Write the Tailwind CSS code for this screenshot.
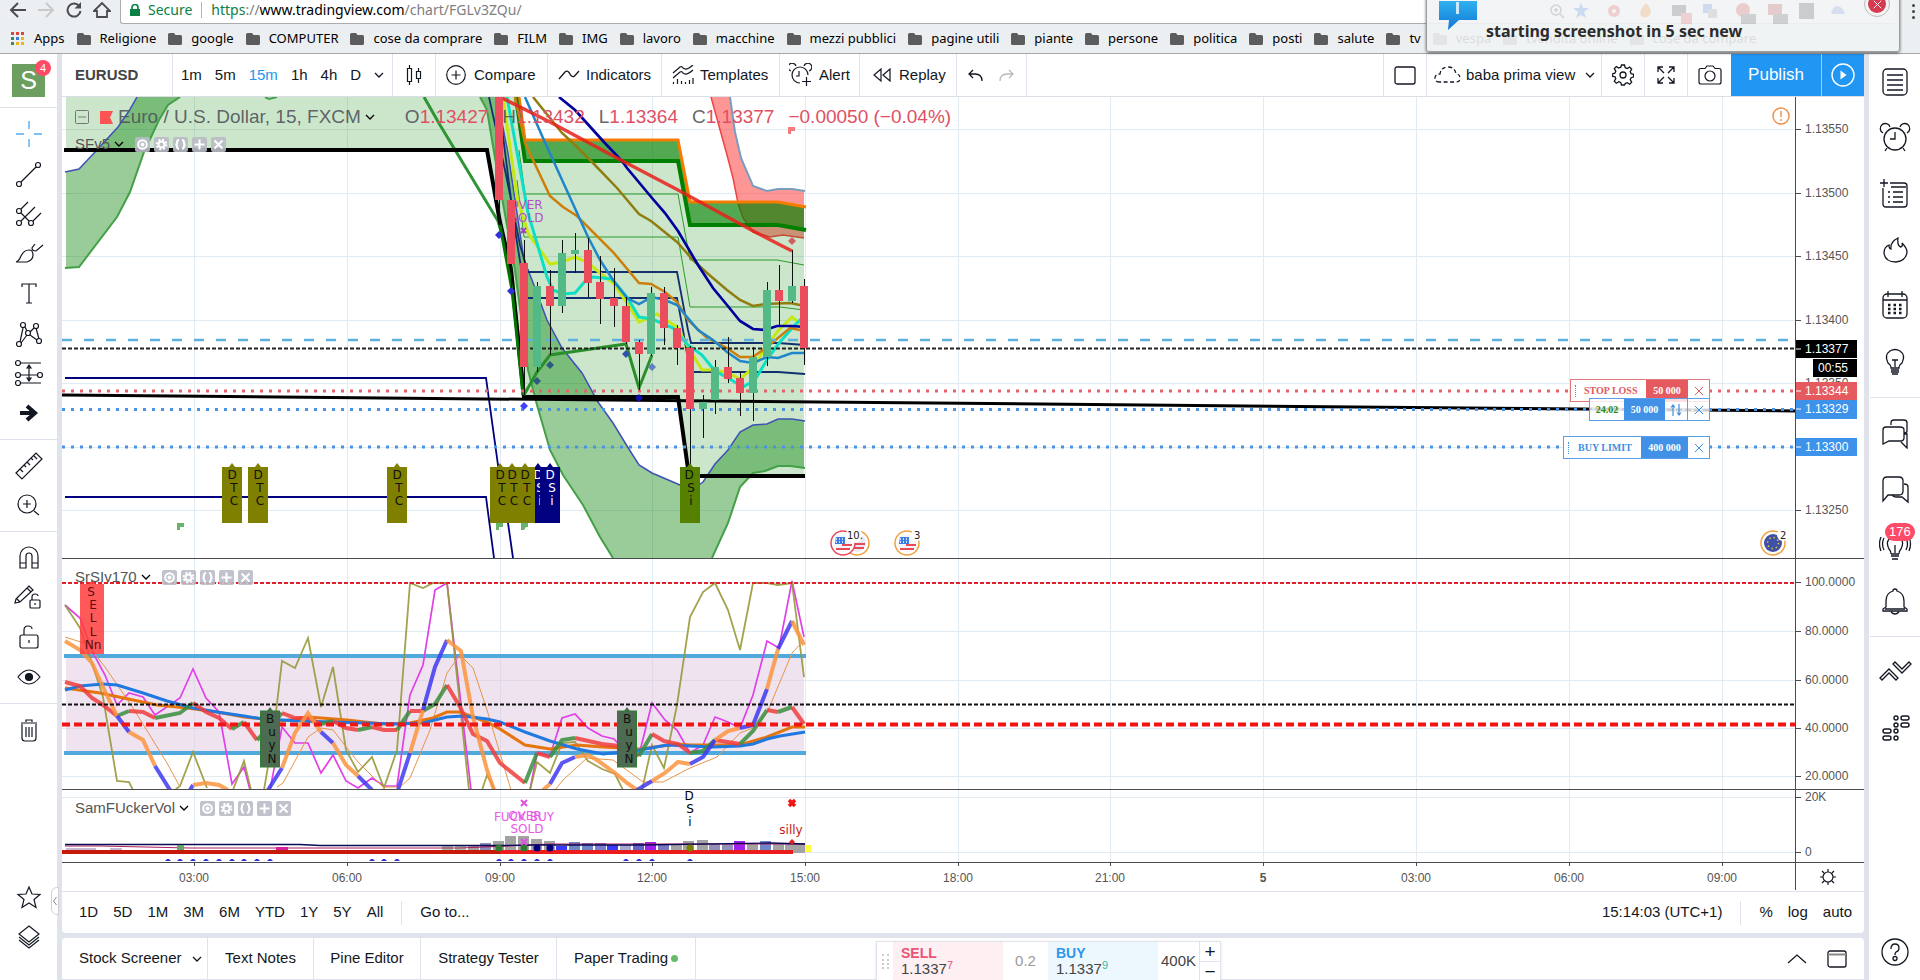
<!DOCTYPE html>
<html lang="en">
<head>
  <meta charset="UTF-8">
  <meta name="viewport" content="width=device-width, initial-scale=1.0">
  <title>EURUSD 1.13377 – TradingView</title>
  <script src="https://cdn.jsdelivr.net/npm/@tailwindcss/browser@4"></script>
</head>
<body class="h-screen flex flex-col overflow-hidden bg-[#e0e3eb] text-[#131722] font-['Liberation_Sans',Arial,sans-serif] text-[15px]">

  <!-- icon library -->
  <svg class="hidden" fill="none">
    <symbol id="i-folder" viewBox="0 0 14 12"><path d="M0 1.5Q0 0 1.5 0H6l1.5 2h5Q14 2 14 3.5v7q0 1.500-1.500 1.500h-11Q0 12 0 10.500z" fill="#5a5c5e"/></symbol>
    <symbol id="i-chev" viewBox="0 0 10 6"><path d="M1 1l4 4 4-4" fill="none" stroke="currentColor" stroke-width="1.300"/></symbol>
    <symbol id="i-x" viewBox="0 0 12 12"><path d="M1 1l10 10M11 1L1 11" fill="none" stroke="currentColor" stroke-width="1.200"/></symbol>
  </svg>

  <!-- browser chrome -->
  <header class="relative shrink-0 h-[54px] border-b border-[#a4a6a8] bg-[#eceff1] font-['Noto_Sans','Open_Sans',sans-serif] text-black">
    <div class="flex h-6">
      <div class="flex w-[120px] shrink-0 items-start justify-around pt-[2px] pl-1 pr-1 text-[#4a4c4f]">
        <button aria-label="Back"><svg width="18" height="16" fill="none" stroke="currentColor" stroke-width="2"><path d="M17 8H2M9 1L2 8l7 7"/></svg></button>
        <button aria-label="Forward" class="text-[#c8cacc]"><svg width="18" height="16" fill="none" stroke="currentColor" stroke-width="2"><path d="M1 8h15M9 1l7 7-7 7"/></svg></button>
        <button aria-label="Reload"><svg width="18" height="16" fill="none" stroke="currentColor" stroke-width="2"><path d="M14.500 4.500A6.500 6.500 0 1 0 15.500 9"/><path d="M16 0v6.500H9.500z" fill="currentColor" stroke="none"/></svg></button>
        <button aria-label="Home"><svg width="18" height="16" fill="none" stroke="currentColor" stroke-width="1.800"><path d="M1 9l8-8 8 8h-3v6H4V9z"/></svg></button>
      </div>
      <div class="flex h-6 flex-1 items-start rounded-bl-[3px] border-b border-l border-[#a9abad] bg-white pl-[9px] text-[14px] leading-5">
        <svg class="mt-1" width="10" height="12"><path d="M0 5h10v7H0z" fill="#0b8043"/><path d="M2 5V3.500a3 3 0 0 1 6 0V5" fill="none" stroke="#0b8043" stroke-width="1.700"/></svg>
        <span class="ml-2 text-[#0b8043]">Secure</span>
        <span class="mx-[9px] mt-[2px] h-4 w-px bg-[#b5b5b5]"></span>
        <div role="textbox" aria-label="Address" class="whitespace-nowrap text-[#808080]"><span class="text-[#0b8043]">https</span>://<span class="text-black">www.tradingview.com</span>/chart/FGLv3ZQu/</div>
      </div>
      <button aria-label="Menu" class="flex w-[25px] shrink-0 flex-col items-center gap-[3px] pt-1 pl-3">
        <span class="h-[3px] w-[3px] rounded-full bg-[#444]"></span><span class="h-[3px] w-[3px] rounded-full bg-[#444]"></span><span class="h-[3px] w-[3px] rounded-full bg-[#444]"></span>
      </button>
    </div>
    <nav id="bookmarks" class="flex h-[29px] items-center gap-3 pl-[11px] text-[13px] whitespace-nowrap">
      <a href="#" class="flex items-center gap-[9px]">
        <svg width="14" height="14"><g fill="#d8473a"><path d="M0 0h3v3H0zM5 0h3v3H5zM10 0h3v3h-3z"/></g><g fill="#3c8a4e"><path d="M0 5h3v3H0zM0 10h3v3H0z"/></g><path d="M5 5h3v3H5z" fill="#3b78d8"/><path d="M10 5h3v3h-3zM5 10h3v3H5zM10 10h3v3h-3z" fill="#eeb21f"/></svg>Apps</a>
    </nav>

    <!-- desktop notification -->
    <div class="absolute top-[-4px] right-5 h-14 w-[474px] rounded-[3px] border border-[#9b9d9f] bg-[#f1f3f4]/90 shadow-[0_1px_3px_rgba(0,0,0,0.6)]">
      <svg class="absolute top-1 left-3" width="38" height="30"><defs><linearGradient id="bub" x1="0" x2="0" y1="0" y2="1"><stop offset="0" stop-color="#2fb2ee"/><stop offset="1" stop-color="#1176d8"/></linearGradient></defs><path d="M0 0h38v19H20L9 29l1-10H0z" fill="url(#bub)"/><path d="M17 1h3v12h-3z" fill="#cdeafc"/></svg>
      <svg class="absolute top-1 left-[120px] opacity-20" width="320" height="26">
        <g fill="none" stroke="#555" stroke-width="1.500"><circle cx="9" cy="9" r="5"/><path d="M13 13l4 4M7 9h4M9 7v4"/></g>
        <path d="M34 2l2 5h6l-5 4 2 6-5-3-5 3 2-6-5-4h6z" fill="#3b78e7"/>
        <circle cx="67" cy="10" r="6" fill="#e04040"/><circle cx="67" cy="10" r="2" fill="#fff"/>
        <path d="M99 2q7 7 4 12-4 4-9 1-3-5 5-13z" fill="#f08020"/>
        <path d="M125 4h14v11h-14z" fill="#333"/><path d="M134 12h11v11h-11z" fill="#e05050"/>
        <path d="M156 3h9v9h-9z" fill="#3b78e7"/><path d="M161 8h9v9h-9z" fill="#889"/>
        <circle cx="196" cy="9" r="7" fill="#d03030"/><path d="M194 13h15v10h-15z" fill="#444"/>
        <path d="M221 3h14v11h-14z" fill="#b03030"/><path d="M226 13h15v10h-15z" fill="#444"/>
        <path d="M252 2h15v16h-15z" fill="#333"/><path d="M284 13q2-9 7-8t7 8z" fill="#6d8de0"/>
      </svg>
      <span class="absolute top-[22px] left-[59px] text-[16px] font-bold leading-6 text-[#2c2c2c] whitespace-nowrap">starting screenshot in 5 sec new</span>
      <button aria-label="Close" class="absolute top-[-6px] right-[9px] grid h-[26px] w-[26px] place-items-center rounded-full border border-[#bbb] bg-[#f4f4f4]">
        <span class="grid h-[18px] w-[18px] place-items-center rounded-full bg-[#d43b50] text-white"><svg width="9" height="9"><use href="#i-x"/></svg></span>
      </button>
    </div>
  </header>

  <div class="flex min-h-0 flex-1 gap-[5px]">
    <!-- drawing tools -->
    <aside class="relative flex w-[57px] shrink-0 flex-col bg-white">
      <div class="relative h-[54px] border-b border-[#dfe1e8] pt-[10px] pl-3">
        <div class="grid h-[33px] w-[33px] place-items-center bg-[#6c9e5f] text-[25px] leading-none text-white">S</div>
        <span class="absolute top-[6px] left-[35px] grid h-4 w-4 place-items-center rounded-full bg-[#ff4a68] text-[11px] text-white">4</span>
      </div>
      <div id="tools" class="flex flex-1 flex-col"></div>
      <button aria-label="Hide toolbar" class="absolute top-[833px] left-[51px] z-10 grid h-7 w-2 place-items-center rounded-l-md border border-[#cfd1da] bg-white text-[#888]"><svg width="4" height="8" fill="none" stroke="currentColor"><path d="M3.500 0L.5 4l3 4"/></svg></button>
    </aside>

    <main class="flex min-w-0 flex-1 flex-col">
      <!-- top toolbar -->
      <div class="flex h-[43px] shrink-0 border-b border-[#dcdee6] bg-white whitespace-nowrap">
        <button class="w-[111px] border-r border-[#e0e3eb] pl-[13px] text-left font-bold text-[#444]">EURUSD</button>
        <div class="flex w-[220px] items-center gap-[13px] border-r border-[#e0e3eb] pl-2">
          <button>1m</button><button>5m</button><button class="text-[#2196f3]">15m</button><button>1h</button><button>4h</button><button>D</button>
          <button aria-label="More intervals"><svg width="10" height="6"><use href="#i-chev"/></svg></button>
        </div>
        <button aria-label="Bar style" class="grid w-[43px] place-items-center border-r border-[#e0e3eb]"><svg width="16" height="24" fill="none" stroke="currentColor" stroke-width="1.200"><path d="M1.500 5.500h4v13h-4zM3.500 2v3M3.500 19v3M10.500 8.500h4v7h-4zM12.500 5v3M12.500 16v4"/></svg></button>
        <button class="flex w-28 items-center gap-2 border-r border-[#e0e3eb] pl-[10px]"><svg width="20" height="20" fill="none" stroke="currentColor" stroke-width="1.200"><circle cx="10" cy="10" r="9.300"/><path d="M5.500 10h9M10 5.500v9"/></svg>Compare</button>
        <button class="flex w-[114px] items-center gap-[6px] border-r border-[#e0e3eb] pl-[10px]"><svg width="22" height="12" fill="none" stroke="currentColor" stroke-width="1.300"><path d="M1 10l6-7q2-2 4 .5l2 3q2 2 3.500.5L21 2"/></svg>Indicators</button>
        <button class="flex w-[118px] items-center gap-[6px] border-r border-[#e0e3eb] pl-[10px]"><svg width="22" height="20" fill="none" stroke="currentColor" stroke-width="1.200"><path d="M1 8l7-6q2-1 3 1l2 1q2 1 8-4M1 13l7-6q2-1 3 1l2 1q2 1 8-4M1.500 17v2M5.500 14v5M9.500 16v3M13.500 17v2M17.500 15v4M21 13v6"/></svg>Templates</button>
        <button class="flex w-20 items-center gap-[7px] border-r border-[#e0e3eb] pl-[9px]"><svg width="23" height="24" fill="none" stroke="currentColor" stroke-width="1.200"><path d="M11 20a8 8 0 1 1 8-8M10 8v5H7M2 8a4 4 0 1 1 5-5M20 8a4 4 0 1 0-5-5M17.500 14v9M13 18.500h9"/></svg>Alert</button>
        <button class="flex w-[97px] items-center gap-2 border-r border-[#e0e3eb] pl-[13px]"><svg width="18" height="14" fill="none" stroke="currentColor" stroke-width="1.200"><path d="M8 1v12L1 7zM17 1v12l-7-6z"/></svg>Replay</button>
        <div class="flex w-[70px] items-center gap-4 border-r border-[#e0e3eb] pl-[11px]">
          <button aria-label="Undo"><svg width="15" height="13" fill="none" stroke="currentColor" stroke-width="1.300"><path d="M5 1L1 5l4 4M1 5h6q7 0 7 7"/></svg></button>
          <button aria-label="Redo" class="text-[#bbb]"><svg width="15" height="13" fill="none" stroke="currentColor" stroke-width="1.300"><path d="M10 1l4 4-4 4M14 5H8q-7 0-7 7"/></svg></button>
        </div>
        <div class="flex-1 border-r border-[#e0e3eb]"></div>
        <button aria-label="Layout" class="grid w-[43px] place-items-center border-r border-[#e0e3eb]"><svg width="22" height="19" fill="none" stroke="currentColor" stroke-width="1.300"><rect x="1" y="1" width="20" height="17" rx="2"/></svg></button>
        <button class="flex w-[175px] items-center border-r border-[#e0e3eb] pl-[7px]"><svg width="27" height="18" fill="none" stroke="currentColor" stroke-width="1.300" stroke-dasharray="4 2.500"><path d="M6 16q-5 0-5-4t5-4q1-7 8-7t8 7q4 0 4 4t-4 4z"/></svg><span class="ml-[5px]">baba prima view</span><svg class="mr-[6px] ml-auto" width="10" height="6"><use href="#i-chev"/></svg></button>
        <button aria-label="Settings" class="grid w-[43px] place-items-center border-r border-[#e0e3eb]"><svg width="22" height="22" fill="none" stroke="currentColor" stroke-width="1.300"><path d="M9.500 1h3l.7 2.700 2 .9 2.500-1.500 2 2-1.500 2.500.9 2 2.400.6v2.800l-2.400.7-.9 2 1.500 2.500-2 2-2.500-1.500-2 .9L12.500 21h-3l-.7-2.400-2-.9-2.500 1.500-2-2 1.500-2.500-.9-2L.7 12.500V9.700l2.200-.6.9-2L2.300 4.600l2-2 2.500 1.500 2-.9z"/><circle cx="11" cy="11" r="3"/></svg></button>
        <button aria-label="Fullscreen" class="grid w-[43px] place-items-center border-r border-[#e0e3eb]"><svg width="18" height="18" fill="none" stroke="currentColor" stroke-width="1.300"><path d="M1 6V1h5M1 1l6 6M12 1h5v5M17 1l-6 6M1 12v5h5M1 17l6-6M17 12v5h-5M17 17l-6-6"/></svg></button>
        <button aria-label="Screenshot" class="grid w-[43px] place-items-center"><svg width="24" height="20" fill="none" stroke="currentColor" stroke-width="1.200"><path d="M3 3.500h4L9 1h6l2 2.500h4q2 0 2 2V17q0 2-2 2H3q-2 0-2-2V5.500q0-2 2-2z"/><circle cx="12" cy="11" r="5"/></svg></button>
        <button class="w-[91px] border-r border-[#9fd0fa] bg-[#2196f3] text-[17px] text-white">Publish</button>
        <button aria-label="Start streaming" class="grid w-[42px] place-items-center bg-[#2196f3]"><svg width="24" height="24"><circle cx="12" cy="12" r="11" fill="none" stroke="#fff" stroke-width="1.400"/><path d="M9.500 7.500v9l6-4.500z" fill="#fff"/></svg></button>
      </div>

      <!-- chart -->
      <section class="relative min-h-0 flex-1 overflow-hidden bg-white">
        <svg id="chart" class="absolute inset-0 h-full w-full" viewBox="62 97 1802 793" preserveAspectRatio="xMinYMin meet" fill="none" font-family="'Liberation Sans',Arial,sans-serif" font-size="12">
          <defs>
            <clipPath id="p1"><path d="M62 97h1733v461H62z"/></clipPath>
            <clipPath id="p2"><path d="M62 559h1733v230H62z"/></clipPath>
            <clipPath id="p3"><path d="M62 790h1733v72H62z"/></clipPath>
          </defs>
          <g id="grid" stroke="#e1ebf1"></g>

          <!-- price pane -->
          <g clip-path="url(#p1)">
            <path d="M711 97L727 155 733 178 738 203 743 218 753 232 770 237 783 235 804 238V191L792 189H778L767 191 753 186 741 158 735 132 730 97z" fill="#ff4040" fill-opacity=".55"/>
            <path d="M711 97L727 155 733 178 738 203 743 218 753 232 770 237 783 235 804 238" stroke="#ef4444" stroke-width="1.500"/>
            <path d="M730 97L735 132 741 158 753 186 767 191 778 189H792L805 191" stroke="#7a9cbd" stroke-width="2"/>
            <path d="M66 97H519L525 140H678L690 202H778L804 207V477H700L689 476 678 397H524L511 270 500 222 487 150H66z" fill="#008000" fill-opacity=".2"/>
            <path d="M519 97L525 140H678L690 202H778L804 207V230L778 225H690L678 161H525L516 97z" fill="#008000" fill-opacity=".6"/>
            <path d="M66 172L79 169 96 151 118 127 129 111 137 97H180L168 105 159 120 144 152 130 192 117 217 79 267 66 268z" fill="#008000" fill-opacity=".4"/>
            <path d="M497 97L508 153 524 260 532 280 547 320 562 348 582 373 598 402 613 423 627 446 639 465 652 473 680 485 691 490 703 482 715 464 728 450 740 432 753 425 767 424 778 419 792 419 804 421V468L790 466H778L765 471 753 473 740 487 728 523 712 558H613L600 537 583 505 563 475 550 450 537 405 528 370 515 270 497 170 487 110 480 97z" fill="#008000" fill-opacity=".4"/>
            <g stroke="#3f51b5" stroke-width="1.500">
              <path d="M65 172L79 169 96 151 118 127 129 111 137 97"/>
              <path d="M497 97L508 153 524 260 532 280 547 320 562 348 582 373 598 402 613 423 627 446 639 465 652 473 680 485 691 490 703 482 715 464 728 450 740 432 753 425 767 424 778 419H792L805 421"/>
            </g>
            <g stroke="#43a047" stroke-width="2">
              <path d="M65 268L79 267 117 217 130 192 144 152 159 120 168 105 180 97M265 97l4 2 8-2"/>
              <path d="M480 97L487 110 497 170 515 270 528 370 537 405 550 450 563 475 583 505 600 537 613 558M712 558L728 523 740 487 753 473 765 471 778 466H790L805 468"/>
            </g>
            <g stroke="#2b9a2b">
              <path d="M519 150L525 194H678L690 260H777L804 265M517 180L524 237H678L690 307H780L804 310"/>
            </g>
            <path d="M411 97L440 135 498 221" stroke="none"/>
            <path d="M424 97L440 125 498 221 511 265 524 395" stroke="#2f9433" stroke-width="3"/>
            <g stroke="#000080" stroke-width="1.800">
              <path d="M65 378H486L498 465 508 523 513 558M65 497H486L494 558"/>
              <path d="M489 97L505 170 520 245 528 272H677L688 330 691 343H778L805 345M498 97L515 230 526 298H677L683 330 690 372H778L805 374" stroke="#12306e"/>
            </g>
            <path d="M64 150H487L500 222 511 270 524 397H678L689 476H805" stroke="#000" stroke-width="4"/>
            <path d="M500 225L512 290 523 395" stroke="#007500" stroke-width="3"/>
            <path d="M519 97L525 140H678L690 202H778L806 207" stroke="#f57c00" stroke-width="3"/>
            <path d="M516 97L525 161H678L690 225H778L806 230" stroke="#008000" stroke-width="4"/>
            <path d="M503 97L517 197 528 233 550 264 562 262 575 257 587 262 600 273 613 283 627 303 639 322 657 314 677 327 688 347 702 370H715L728 373 740 379 753 368 765 348 777 332 792 317 805 328" stroke="#c6e80e" stroke-width="3"/>
            <path d="M507 97L528 213 547 277 553 290 563 294 575 293 587 279 593 277 612 279 627 297 639 317 652 319 673 328 688 345 702 355 715 371 728 378 743 387 755 380 768 358 780 342 793 327 805 315" stroke="#0be0c4" stroke-width="3"/>
            <path d="M515 97L525 143 550 196 563 207 577 216 613 252 639 283 651 284 665 292 677 302 688 320 707 338 727 348 740 357H753L767 347 790 328 805 331" stroke="#cc7f0b" stroke-width="2.500"/>
            <path d="M533 97L562 133 575 145 592 162 617 188 639 214 651 221 677 242 693 260 707 273 727 290 740 300 753 306 765 304 790 303 805 306" stroke="#8f7d10" stroke-width="2.500"/>
            <path d="M525 97L543 138 568 193 588 237 600 260 613 280 627 298 639 304 652 297 665 300 677 305 698 330 713 340 727 352 740 361 753 363 767 357 778 358 792 353H805" stroke="#1f86c9" stroke-width="2.500"/>
            <path d="M559 97L575 110 603 141 622 161 627 168 652 198 665 213 678 231 698 265 713 288 727 305 740 321 753 329 765 330 777 326H792L805 327" stroke="#00009c" stroke-width="2.700"/>
            <path d="M500 97L550 122 617 158 678 190 755 232 792 251" stroke="#e8201a" stroke-opacity=".85" stroke-width="3.500"/>
            <path d="M524 395L537 372 550 355 626 344 639 388 652 355" stroke="#2a8e2a" stroke-width="3"/>
            <path d="M62 340H1795" stroke="#5fb0da" stroke-width="2.500" stroke-dasharray="10 12"/>
            <path d="M62 348.500H1795" stroke="#222" stroke-width="2" stroke-dasharray="4 2"/>
            <path d="M62 391H1795" stroke="#e4626c" stroke-width="3" stroke-dasharray="3 6"/>
            <path d="M62 395L1795 411" stroke="#000" stroke-width="3"/>
            <path d="M62 409.500H1795M62 447H1795" stroke="#4b93e2" stroke-width="3" stroke-dasharray="3 6"/>
            <g font-family="'DejaVu Sans',sans-serif" fill="#b050c8" text-anchor="middle"><text x="526" y="209">OVER</text><text x="527" y="222">SOLD</text></g>
            <path d="M521 228l5 5m0-5l-5 5" stroke="#a040c0" stroke-width="2"/>
            <g id="candles"></g>
            <g id="diamonds"></g>
            <path d="M177 523h7v4h-4v3h-3zM496 523h7v4h-4v3h-3zM521 523h7v4h-2l-2 3h-3z" fill="#66b56a"/>
            <path d="M788 127h7v4h-4v3h-3z" fill="#f47c7c"/>
            <g id="labels" font-family="'DejaVu Sans',sans-serif" text-anchor="middle"></g>
            <!-- economic events -->
            <g stroke-width="1.500">
              <circle cx="857" cy="543" r="12" fill="#fff" stroke="#f0a040"/><circle cx="857" cy="543" r="9" fill="#e8e8f4"/><path d="M850 548h14M850 544h15" stroke="#e84a5a" stroke-width="2"/>
              <circle cx="843" cy="543" r="12" fill="#fff" stroke="#e84a5a"/><circle cx="843" cy="543" r="9" fill="#f6f6fa"/><path d="M836 549h14M842 545h10" stroke="#e84a5a" stroke-width="2"/><path d="M836 537h9v7h-10z" fill="#3c7be0"/><path d="M836 539h9M836 542h9" stroke="#fff" stroke-dasharray="1 2"/>
              <circle cx="907" cy="543" r="12" fill="#fff" stroke="#f0a040"/><circle cx="907" cy="543" r="9" fill="#f6f6fa"/><path d="M900 549h14M906 545h10" stroke="#e84a5a" stroke-width="2"/><path d="M900 537h9v7h-10z" fill="#3c7be0"/><path d="M900 539h9M900 542h9" stroke="#fff" stroke-dasharray="1 2"/>
              <circle cx="1773" cy="543" r="12" fill="#fff" stroke="#f0a040"/><circle cx="1773" cy="543" r="9" fill="#3f51a5"/><circle cx="1773" cy="543" r="5.500" stroke="#f4d03f" stroke-dasharray="1.300 3"/>
            </g>
            <g fill="#fff"><circle cx="854" cy="535" r="8"/><circle cx="917" cy="535" r="6"/><circle cx="1783" cy="535" r="6"/></g>
            <g font-family="'DejaVu Sans',sans-serif" font-size="10" fill="#222"><text x="847" y="539">10.</text><text x="914" y="539">3</text><text x="1780" y="539">2</text></g>
            <circle cx="1781" cy="116" r="8" stroke="#f0924e" stroke-width="1.500"/><path d="M1781 111v6M1781 119v2" stroke="#f0924e" stroke-width="1.500"/>
          </g>

          <!-- oscillator pane -->
          <g clip-path="url(#p2)">
            <path d="M66 656H804V753H66z" fill="#e0c8e0" fill-opacity=".5"/>
            <path d="M64 656H806M64 753H806" stroke="#4fa9dc" stroke-width="4"/>
            <path d="M65 605L80 618 93 653 105 675 117 705 129 693 143 697 155 715 180 698 193 669 206 698 219 712 232 784 244 767 250 790M270 790L282 727 295 743H308L321 773 333 755 346 781 358 788 372 778 384 786H397L410 695 423 665 435 590 447 583 471 790M530 790L537 753 550 756 562 718 575 714 588 728 602 736 614 739 627 753 639 755 652 703 665 720 677 730 690 753 703 745 715 717 728 722 740 728 753 695 767 641 779 648 792 581 804 637" stroke="#e040e8" stroke-width="1.700"/>
            <path d="M65 605L80 628 90 657 103 697 117 781 129 782 133 790M175 790L180 786 193 752 207 788M233 790L244 761 251 790M264 790L273 737 282 661 295 668 308 638 321 707 333 667 346 750 358 772 372 757 384 788 397 750 410 583 423 588 433 583H447L469 790M482 790L487 775 495 790M530 790L537 762 550 773 562 743 575 742 588 761 602 769 615 774 623 790M642 790L652 745 664 768 677 705 690 617 703 592 715 583 728 610 740 650 753 583H767L778 585 792 583 804 677" stroke="#98983c" stroke-opacity=".9" stroke-width="1.800"/>
            <path d="M65 637L87 644 105 667 133 708 167 763 180 787M277 787L283 783 308 737 321 728 333 730 358 762 383 787H400L410 778 430 730 447 673 460 655 473 668 487 710 511 790M555 790L563 780 587 758 613 760 643 782H663L690 768 717 757 740 733 755 727 767 713 792 653 804 640" stroke="#e8944a"/>
            <path d="M65 688L100 693 133 700 157 705 187 708 217 712 244 717 283 721 308 717 347 720 383 724 410 723 433 718 447 712H460L487 722 500 729 525 745 550 749 577 745 603 747 640 749 677 744 690 745H740L767 737 792 727H805" stroke="#e5750f" stroke-width="3"/>
            <path d="M65 690L80 686 103 684 117 685 143 693 167 701 193 708 217 712 244 716 263 719 300 721 397 724 423 723 447 717 463 716 487 719 500 722 525 732 550 741 577 749 603 754 640 750 667 745 713 747 740 746 753 744 767 739 780 736 805 732" stroke="#2079e0" stroke-width="3"/>
            <g id="osc" stroke-width="4" stroke-opacity=".85"></g>
            <path d="M62 583H1795" stroke="#e0202a" stroke-width="2" stroke-dasharray="4 2"/>
            <path d="M62 704.500H1795" stroke="#111" stroke-width="2" stroke-dasharray="4 2"/>
            <path d="M62 724.500H1795" stroke="#f01414" stroke-width="4" stroke-dasharray="8 4"/>
            <g id="oscLabels" font-family="'DejaVu Sans',sans-serif" text-anchor="middle"></g>
          </g>

          <!-- volume pane -->
          <g clip-path="url(#p3)">
            <g id="volume"></g>
            <path d="M65 846H100L190 848H460L550 844 640 844H805" stroke="#b02060" stroke-width="1.200"/>
            <path d="M65 844.500H300L320 845.500H500L540 845H640L770 843 805 844" stroke="#0a0a55" stroke-width="1.300"/>
            <path d="M66 848h30v3H66zM110 848h12v3h-12z" fill="#c8b8d8"/><path d="M276 847h12v3h-12z" fill="#d8209a"/><path d="M177 845h7v5h-7z" fill="#66a56a"/>
            <path d="M62 852H793" stroke="#c81a0a" stroke-width="4"/><path d="M500 852H793" stroke="#ec1c1c" stroke-width="4"/>
            <path d="M805 845h6v7h-6z" fill="#ffff3c"/>
            <g id="tri" fill="#3030d8"></g>
            <g fill="#2e7d32"><circle cx="499" cy="848" r="3.500"/><circle cx="524" cy="848" r="3.500"/></g><g fill="#000080"><circle cx="537" cy="848" r="3.500"/><circle cx="550" cy="848" r="3.500"/></g>
            <circle cx="690" cy="848" r="3.500" fill="#808000"/>
            <g font-family="'DejaVu Sans',sans-serif" fill="#e85ae8" text-anchor="middle"><text x="524" y="821">FUCK BUY</text><text x="525" y="820">OVER</text><text x="527" y="833">SOLD</text></g>
            <path d="M521 800l6 6m0-6l-6 6M521 839l6 6m0-6l-6 6" stroke="#e050e0" stroke-width="2"/>
            <path d="M789 800l6 6m0-6l-6 6" stroke="#f01414" stroke-width="3.500"/>
            <path d="M792 839l3 3-3 3-3-3z" fill="#e02020"/>
            <text x="791" y="834" text-anchor="middle" font-family="'DejaVu Sans',sans-serif" fill="#c41818">silly</text>
            <g font-family="'DejaVu Sans',sans-serif" fill="#000" text-anchor="middle"><text x="689" y="800">D</text><text x="690" y="813">S</text><text x="690" y="826">i</text></g>
          </g>

          <!-- axes -->
          <g stroke="#4c4c50"><path d="M62 558.500H1864M62 789.500H1864M62 862.500H1864M1795.500 97V890"/></g>
          <g id="axes" stroke="#4c4c50"></g>
          <g id="axisText" fill="#555"></g>
          <g stroke="#fff"><path d="M1796 349h5M1796 391h5M1796 409h5M1796 447h5"/></g>
          <g stroke="#131722" stroke-width="1.200"><circle cx="1828" cy="877" r="5"/><path d="M1828 869v3M1828 882v3M1820 877h3M1833 877h3M1822 871l2 2M1832 881l2 2M1834 871l-2 2M1824 881l-2 2"/></g>
        </svg>

        <div class="absolute top-2 left-[13px] flex h-6 items-center text-[19px] whitespace-nowrap text-[#50535a]/90">
          <button aria-label="Collapse legend"><svg width="14" height="14" fill="none" stroke="#777"><rect x=".5" y=".5" width="13" height="13" rx="1"/><path d="M3 7h8"/></svg></button>
          <svg class="ml-[11px]" width="13" height="13"><path d="M0 0h13l-3 6.500 3 6.500H0z" fill="#ff5252"/></svg>
          <span class="ml-[5px]">Euro / U.S. Dollar, 15, FXCM</span>
          <svg class="ml-1 text-black" width="10" height="6"><use href="#i-chev"/></svg>
          <span class="ml-[30px]">O<span class="text-[#e04f64]">1.13427</span></span>
          <span class="ml-[14px]">H<span class="text-[#e04f64]">1.13432</span></span>
          <span class="ml-[14px]">L<span class="text-[#e04f64]">1.13364</span></span>
          <span class="ml-[14px]">C<span class="text-[#e04f64]">1.13377</span></span>
          <span class="ml-[14px] text-[#e04f64]">−0.00050 (−0.04%)</span>
        </div>
        <div class="study absolute top-[38px] left-[13px] flex h-[18px] items-center gap-1 text-[#555]">SFv5</div>
        <div class="study absolute top-[471px] left-[13px] flex h-[18px] items-center gap-1 text-[#555]">SrSIv170</div>
        <div class="study absolute top-[702px] left-[13px] flex h-[18px] items-center gap-1 text-[#555]">SamFUckerVol</div>

        <!-- working orders -->
        <div class="absolute top-[282px] right-[154px] flex h-[23px] border border-[#e4777c] bg-white font-['Liberation_Serif',serif] text-[10px] font-bold text-[#e05a60]">
          <span class="flex w-[75px] items-center gap-[6px] pl-1"><span class="h-3 w-[3px] border-l border-dotted border-[#e05a60]"></span>STOP LOSS</span>
          <button class="w-[42px] bg-[#e55a5e] text-white">50 000</button>
          <button aria-label="Cancel stop loss" class="grid w-[21px] place-items-center"><svg width="10" height="10"><use href="#i-x"/></svg></button>
        </div>
        <div class="absolute top-[301px] right-[154px] flex h-[23px] border border-[#5b9fe8] bg-white/80 font-['Liberation_Serif',serif] text-[10px] font-bold text-[#4090e0]">
          <span class="grid w-[34px] place-items-center text-[#2a8a10]">24.02</span>
          <button class="w-[41px] bg-[#4192e6] text-white">50 000</button>
          <button aria-label="Reverse position" class="grid w-[23px] place-items-center border-r border-[#5b9fe8]"><svg width="12" height="12" fill="none" stroke="currentColor" stroke-width="1.200"><path d="M3 12V1M1 3.500L3 1l2 2.500M9 0v11M7 8.500L9 11l2-2.500"/></svg></button>
          <button aria-label="Close position" class="grid w-[21px] place-items-center"><svg width="10" height="10"><use href="#i-x"/></svg></button>
        </div>
        <div class="absolute top-[339px] right-[154px] flex h-[23px] border border-[#5b9fe8] bg-white font-['Liberation_Serif',serif] text-[10px] font-bold text-[#4090e0]">
          <span class="flex w-[77px] items-center gap-[7px] pl-1"><span class="h-3 w-[3px] border-l border-dotted border-[#4090e0]"></span>BUY LIMIT</span>
          <button class="w-[47px] bg-[#4192e6] text-white">400 000</button>
          <button aria-label="Cancel buy limit" class="grid w-[21px] place-items-center"><svg width="10" height="10"><use href="#i-x"/></svg></button>
        </div>
      </section>

      <!-- date ranges -->
      <div class="flex h-[42px] shrink-0 items-center gap-[15px] rounded-b border-t border-[#e0e3eb] bg-white pr-3 pl-[17px]">
        <button>1D</button><button>5D</button><button>1M</button><button>3M</button><button>6M</button><button>YTD</button><button>1Y</button><button>5Y</button><button>All</button>
        <span class="mx-[3px] h-6 w-px bg-[#e0e3eb]"></span>
        <button>Go to...</button>
        <button class="ml-auto">15:14:03 (UTC+1)</button>
        <span class="mx-[3px] h-6 w-px bg-[#e0e3eb]"></span>
        <button>%</button><button>log</button><button>auto</button>
      </div>

      <!-- bottom panel tabs -->
      <div class="relative mt-[5px] flex h-[42px] shrink-0 items-stretch rounded-t border-b border-[#e0e3eb] bg-white whitespace-nowrap">
        <button class="flex w-[146px] items-center gap-[10px] border-r border-[#e0e3eb] pl-[17px]">Stock Screener<svg width="10" height="6"><use href="#i-chev"/></svg></button>
        <button class="w-[106px] border-r border-[#e0e3eb]">Text Notes</button>
        <button class="w-[107px] border-r border-[#e0e3eb]">Pine Editor</button>
        <button class="w-[136px] border-r border-[#e0e3eb]">Strategy Tester</button>
        <button class="flex w-[139px] items-center justify-center gap-[3px] border-r border-[#e0e3eb]">Paper Trading<span class="h-[7px] w-[7px] rounded-full bg-[#66bb6a]"></span></button>
        <button aria-label="Open panel" class="ml-auto pr-5"><svg width="20" height="10" fill="none" stroke="currentColor" stroke-width="1.300"><path d="M1 9l9-8 9 8"/></svg></button>
        <button aria-label="Maximize panel" class="pr-[17px]"><svg width="20" height="18" fill="none" stroke="currentColor" stroke-width="1.300"><rect x="1" y="1" width="18" height="16" rx="2"/><path d="M1 4.500h18" stroke="#888" stroke-width="2"/></svg></button>

        <div class="absolute top-[3px] left-[814px] flex h-10 border border-[#e0e3eb] bg-white shadow">
          <span class="flex w-4 items-center justify-center gap-[3px]"><span class="h-[15px] border-l-2 border-dotted border-[#ccc]"></span><span class="h-[15px] border-l-2 border-dotted border-[#ccc]"></span></span>
          <button class="w-[110px] bg-[#fdeff2] pl-2 text-left text-[15px] leading-4 text-[#444]"><b class="block text-[14px] font-semibold text-[#ea5475]">SELL</b>1.1337<sup class="text-[11px] leading-none text-[#ea5475]">7</sup></button>
          <span class="grid w-[45px] place-items-center text-[#9a9a9a]">0.2</span>
          <button class="w-[110px] bg-[#edf7fe] pl-2 text-left text-[15px] leading-4 text-[#444]"><b class="block text-[14px] font-semibold text-[#2e96ea]">BUY</b>1.1337<sup class="text-[11px] leading-none text-[#3cb8a0]">9</sup></button>
          <input aria-label="Quantity" value="400K" class="w-[41px] pl-[3px] text-[#444] outline-none">
          <div class="flex w-[21px] flex-col border-l border-[#e0e3eb] text-center text-[19px] leading-none">
            <button class="flex-1 border-b border-[#e0e3eb]">+</button><button class="flex-1">−</button>
          </div>
        </div>
      </div>
    </main>

    <aside id="widgets" class="flex w-[51px] shrink-0 flex-col bg-white pl-px"></aside>
  </div>

  <script>
    const $ = id => document.getElementById(id);

    // bookmarks
    ['Religione', 'google', 'COMPUTER', 'cose da comprare', 'FILM', 'IMG', 'lavoro', 'macchine', 'mezzi pubblici', 'pagine utili', 'piante', 'persone', 'politica', 'posti', 'salute', 'tv', 'vespa', 'tvendita online', 'cose da compare'].forEach(name => {
      $('bookmarks').innerHTML += `<a href="#" class="flex items-center gap-[9px]"><svg width="14" height="12"><use href="#i-folder"/></svg>${name}</a>`;
    });

    // left toolbar: [label, path markup]
    const toolGroups = [
      [
        ['Cross', '<g stroke="#7cc0f8" stroke-width="1.800"><path d="M15 2v8M15 20v8M2 15h8M20 15h8"/></g>'],
        ['Trend line', '<circle cx="5" cy="25" r="2.500"/><circle cx="24" cy="6" r="2.500"/><path d="M7 23L22 8"/>'],
        ['Pitchfork', '<circle cx="5" cy="12" r="2.500"/><circle cx="5" cy="24" r="2.500"/><circle cx="17" cy="24" r="2.500"/><path d="M7 10l7-7M7 22L21 8M19 22l8-8M7 14l8 8"/>'],
        ['Brush', '<path d="M2 23q3-1 5-6 3-6 8-6 4 0 4 5t-6 7zM29 6l-7 6q-4 0-4-3l3-4"/>'],
        ['Text', '<path d="M8 8V5h14v3M15 5v19M12 24h6"/>'],
        ['Pattern', '<circle cx="5" cy="25" r="2.500"/><circle cx="9" cy="6" r="2.500"/><circle cx="14" cy="14" r="2.500"/><circle cx="22" cy="7" r="2.500"/><circle cx="25" cy="22" r="2.500"/><path d="M6 23L9 9M11 8l2 4M16 13l4-4M22 9l3 11M7 24l6-8M16 16l7 5"/>'],
        ['Prediction', '<circle cx="4" cy="4" r="2.500"/><circle cx="4" cy="16" r="2.500"/><circle cx="26" cy="16" r="2.500"/><circle cx="4" cy="24" r="2.500"/><path d="M7 4h20M7 16h16M7 24h20M15 7v14M13 9l2-3 2 3zM13 19l2 3 2-3z"/>'],
        ['Arrow', '<path d="M6 14h14M13 7l8 7-8 7" stroke-width="4"/>'],
      ],
      [
        ['Measure', '<path d="M2 22L22 2l6 6L8 28zM6 18l3 3M10 14l2 2M13 11l3 3M17 7l2 2M20 5l3 3"/>'],
        ['Zoom in', '<circle cx="13" cy="13" r="9"/><path d="M9 13h8M13 9v8M20 20l5 4"/>'],
      ],
      [
        ['Magnet', '<path d="M6 25V13a9 9 0 0 1 18 0v12h-6V13a3 3 0 0 0-6 0v12zM6 20h6M18 20h6"/>'],
        ['Stay in drawing mode', '<path d="M2 16L15 3l4 4L6 19l-5 1zM13 5l4 4M3 16l3 3"/><rect x="16" y="17" width="10" height="8" rx="1"/><path d="M18 17v-3q0-3 3-3t3 2M21 20v2"/>'],
        ['Lock drawings', '<rect x="6" y="12" width="18" height="13" rx="2"/><path d="M10 12V7q0-4 4-4t4 3M15 17v3"/>'],
        ['Hide drawings', '<path d="M4 14Q15 0 26 14 15 28 4 14z"/><circle cx="15" cy="14" r="3.500" fill="#131722"/>'],
      ],
      [['Remove drawings', '<path d="M7 8h16M12 7V5h6v2M8 9v14q0 3 3 3h8q3 0 3-3V9M12 12v10M15 12v10M18 12v10"/>']],
    ];
    const bottomTools = [
      ['Favorites', '<path d="M15 4l3 7 8 .5-6 5 2 8-7-4.500-7 4.500 2-8-6-5 8-.5z"/>'],
      ['Object tree', '<path d="M15 3l10 8-10 8-10-8zM5 14l10 8 10-8M5 17l10 8 10-8M8 16"/>'],
    ];
    const toolBtn = ([label, art]) => `<button aria-label="${label}" class="grid h-10 place-items-center"><svg width="30" height="30" fill="none" stroke="currentColor" stroke-width="1.200">${art}</svg></button>`;
    $('tools').innerHTML =
      toolGroups.map((g, i) => `<div class="flex flex-col pt-[6px] pb-[5px] ${i < 3 ? 'border-b border-[#e0e3eb]' : ''}">${g.map(toolBtn).join('')}</div>`).join('') +
      `<div class="mt-auto mb-[22px] flex flex-col">${bottomTools.map(toolBtn).join('')}</div>`;

    // right toolbar
    const widgetGroups = [
      [
        ['Watchlist', '<rect x="4" y="3" width="24" height="26" rx="4"/><path d="M8 9h16M8 14h16M8 19h16M8 24h16"/>'],
        ['Alerts', '<circle cx="16" cy="17" r="11"/><path d="M16 10v7h-5M4 11a5 5 0 1 1 7-6M28 11a5 5 0 1 0-7-6M8 26l-2 3M24 26l2 3"/>'],
        ['Data window', '<path d="M11 5h14q3 0 3 3v18q0 3-3 3H7q-3 0-3-3V10M9 14h2M14 14h10M9 19h2M14 19h10M9 24h2M14 24h10M12 9h15M5 1v8M1 5h8"/>'],
        ['Hotlists', '<path d="M19 4q-1 8 3 9 2-1 1-4 5 5 5 9-1 9-11 10Q6 28 5 19q0-6 5-8 0 4 2 4-1-7 7-11z"/>'],
        ['Calendar', '<rect x="4" y="4" width="24" height="24" rx="4"/><path d="M4 10h24M9 1v6M23 1v6"/><g stroke-width="2.500" stroke-dasharray="2.500 3"><path d="M9 15h15M9 19h15M9 23h15"/></g>'],
        ['Ideas', '<path d="M12 22q0-3-3-5-4-8 2-12 5-3 10 0 6 4 2 12-3 2-3 5zM12 24h8M12 26h8M13 28h6M13 14h6M16 14v7"/>'],
      ],
      [
        ['Public chats', '<path d="M12 8V6q0-3 3-3h10q3 0 3 3v8q0 2-3 2M7 10h14q4 0 4 3v8q0 3-4 3H10l-6 3V13q0-3 3-3zM25 17h3v14l-6-6"/>'],
        ['Private chats', '<path d="M8 4h12q4 0 4 4v10q0 4-4 4H9l-5 6V8q0-4 4-4zM25 11q4 0 4 3v15l-6-5h-6q-3 0-4-2"/>'],
        ['Ideas stream', '<path d="M12 25q0-3-2-5-4-8 2-11M20 25q0-3 2-5 4-8-2-11M12 25h8M12 27h8M13 30h6M16 16v8M5 9q-3 6 0 12M2 8q-3 7 0 14M27 9q3 6 0 12M30 8q3 7 0 14"/>'],
        ['Notifications', '<path d="M16 4q2 0 2 2 7 2 7 10v6l3 2v2H4v-2l3-2v-6q0-8 7-10 0-2 2-2zM6 24h20M12 27q4 4 8 0"/>'],
      ],
      [
        ['Order panel', '<path d="M1 22l9-9 9 9-2 2-7-7-7 7zM14 8l9 9 9-9-2-2-7 7-7-7z"/>'],
        ['DOM', '<g stroke-width="1.400"><rect x="22" y="4" width="8" height="4" rx="2"/><rect x="22" y="11" width="8" height="4" rx="2"/><circle cx="17" cy="6" r="2"/><circle cx="17" cy="13" r="2"/><circle cx="17" cy="19" r="2"/><circle cx="17" cy="26" r="2"/><rect x="4" y="17" width="8" height="4" rx="2"/><rect x="4" y="24" width="8" height="4" rx="2"/></g>'],
      ],
    ];
    const widgetBtn = ([label, art]) => `<button aria-label="${label}" class="relative grid h-14 place-items-center"><svg width="33" height="32" fill="none" stroke="currentColor" stroke-width="1.300">${art}</svg>${label === 'Ideas stream' ? '<span class="absolute top-[6px] left-[15px] rounded-full bg-[#ff4a68] px-1 text-[13px] leading-[18px] text-white">176</span>' : ''}</button>`;
    $('widgets').innerHTML =
      widgetGroups.map((g, i) => `<div class="flex flex-col ${i ? 'pt-[7px]' : ''} ${i < 2 ? 'border-b border-[#e0e3eb] pb-[7px]' : ''}">${g.map(widgetBtn).join('')}</div>`).join('') +
      '<button aria-label="Help" class="mt-auto mb-[14px] grid place-items-center"><svg width="28" height="28" fill="none" stroke="currentColor" stroke-width="1.300"><circle cx="14" cy="14" r="13"/><path d="M10 11q0-5 4-5t4 4q0 3-3 4-1 1-1 3"/><circle cx="14" cy="20.500" r="2"/></svg></button>';

    // study legend buttons
    const studyIcons = [
      '<circle cx="7.500" cy="7.500" r="4.300"/><circle cx="7.500" cy="7.500" r="1" />',
      '<circle cx="7.500" cy="7.500" r="3"/><circle cx="7.500" cy="7.500" r="4.800" stroke-dasharray="2 1.770"/>',
      '<path d="M6 3Q4 3 4 5.500T2.500 7.500Q4 7.500 4 9.500T6 12M9 3q2 0 2 2.500t1.500 2Q11 7.500 11 9.500T9 12"/>',
      '<path d="M7.500 2.500v10M2.500 7.500h10"/>',
      '<path d="M3.500 3.500l8 8M11.500 3.500l-8 8"/>',
    ];
    document.querySelectorAll('.study').forEach(el => {
      el.innerHTML += '<svg class="text-black" width="10" height="6"><use href="#i-chev"/></svg><span class="ml-[7px] flex gap-1">' +
        ['Hide', 'Format', 'Source code', 'Add', 'Remove'].map((label, i) => `<button aria-label="${label}" class="rounded-[2px] bg-[#b9bbc6]/90"><svg width="15" height="15" fill="none" stroke="#fff" stroke-width="2">${studyIcons[i]}</svg></button>`).join('') + '</span>';
    });

    // grid and axes
    const times = [[194, '03:00'], [347, '06:00'], [500, '09:00'], [652, '12:00'], [805, '15:00'], [958, '18:00'], [1110, '21:00'], [1263, '5'], [1416, '03:00'], [1569, '06:00'], [1722, '09:00']];
    const levels = [[129, '1.13550'], [193, '1.13500'], [256, '1.13450'], [320, '1.13400'], [383, '1.13350'], [510, '1.13250'], [582, '100.0000'], [631, '80.0000'], [680, '60.0000'], [728, '40.0000'], [776, '20.0000'], [797, '20K'], [852, '0']];
    let grid = '', ticks = '', text = '';
    times.forEach(([x, t]) => {
      grid += `<path d="M${x}.5 97V862"/>`;
      ticks += `<path d="M${x}.5 862v4"/>`;
      text += `<text x="${x}" y="882" text-anchor="middle" ${t === '5' ? 'font-weight="bold"' : ''}>${t}</text>`;
    });
    levels.forEach(([y, t]) => {
      grid += `<path d="M62 ${y}.5H1795"/>`;
      ticks += `<path d="M1796 ${y}.5h5"/>`;
      text += `<text x="1805" y="${y + 4}">${t}</text>`;
    });
    [[340, 18, '#000', '1.13377'], [382, 18, '#e55a5e', '1.13344'], [400, 19, '#3d92ea', '1.13329'], [438, 18, '#3d92ea', '1.13300']].forEach(([y, h, c, t]) => {
      text += `<rect x="1796" y="${y}" width="61" height="${h}" fill="${c}"/><text x="1805" y="${y + 13}" fill="#fff">${t}</text>`;
    });
    text += '<rect x="1813" y="359" width="44" height="18" fill="#000"/><text x="1818" y="372" fill="#fff">00:55</text>';
    $('grid').innerHTML = grid + '<path d="M62 447.500H1795"/>';
    $('axes').innerHTML = ticks;
    $('axisText').innerHTML = text;

    // candles: x, body top, body bottom, wick top, wick bottom, up
    const candles = [
      [499, 90, 200, 90, 225, 0], [511, 200, 264, 200, 290, 0], [524, 263, 367, 240, 395, 0], [537, 286, 367, 282, 372, 1],
      [550, 286, 306, 270, 355, 0], [562, 253, 306, 240, 313, 1], [575, 250, 254, 233, 273, 1], [588, 250, 283, 238, 297, 0],
      [600, 282, 299, 256, 324, 0], [614, 298, 306, 268, 327, 0], [626, 306, 342, 297, 344, 0], [639, 342, 354, 340, 390, 0],
      [651, 293, 354, 287, 356, 1], [664, 293, 328, 287, 345, 0], [677, 328, 348, 325, 365, 0], [690, 348, 409, 346, 476, 0],
      [703, 402, 409, 395, 438, 1], [715, 367, 400, 360, 414, 1], [728, 367, 379, 337, 383, 0], [740, 378, 393, 372, 416, 0],
      [753, 357, 393, 347, 421, 1], [767, 290, 357, 282, 366, 1], [779, 290, 301, 265, 326, 0], [792, 286, 301, 250, 303, 1], [804, 286, 348, 279, 365, 0],
    ];
    $('candles').innerHTML = candles.map(([x, t, b, wt, wb, up]) =>
      `<path d="M${x}.500 ${wt}V${wb}" stroke="#111"/><rect x="${x - 4}" y="${t}" width="8" height="${b - t}" fill="${up ? '#53b987' : '#eb4d5c'}"/>`).join('');

    $('diamonds').innerHTML = [[499, 235, '#3030d8'], [511, 291, '#3030d8'], [524, 406, '#4040ff'], [537, 381, '#2a5a80'], [550, 365, '#2a5a80'], [626, 354, '#3050b0'], [639, 398, '#1010b0'], [652, 367, '#6080c0'], [792, 241, '#d06060']]
      .map(([x, y, c]) => `<path d="M${x} ${y - 4}l4 4-4 4-4-4z" fill="${c}"/>`).join('');

    // vertical text tags
    const box = (x, y, w, h, fill, extra = '') =>
      `<path d="M${x - 3} ${y}l3-4 3 4z" fill="${fill}"/><rect x="${x - w / 2}" y="${y}" width="${w}" height="${h}" fill="${fill}" ${extra}/>`;
    const letters = (x, y, color, word) =>
      word.split(' ').map((ch, i) => `<text x="${x + (i ? 2 : 0)}" y="${y + 12 + Math.round(i * 13.2)}" fill="${color}">${ch}</text>`).join('');
    const dtc = [232, 258, 397, 500, 512, 525];
    $('labels').innerHTML =
      [538, 550].map(x => box(x, 467, 20, 56, '#000080') + letters(x, 467, '#fff', 'D S i')).join('') +
      dtc.map(x => box(x, 467, 20, 56, '#808000')).join('') + dtc.map(x => letters(x, 467, '#111', 'D T C')).join('') +
      box(690, 467, 20, 56, '#558000') + letters(689, 467, '#111', 'D S i');
    $('oscLabels').innerHTML = box(92, 584, 24, 70, '#ff3c3c', 'fill-opacity=".85"') + letters(91, 584, '#5a1010', 'S E L L Nn') +
      [270, 627].map(x => box(x, 711, 19, 56, '#4c6b50', 'stroke="#2e7d32"') + letters(x, 711, '#111', 'B u y N')).join('');

    // two-colour oscillator lines; consecutive runs share their end point
    const R = '#f03c3c', G = '#388e3c', B = '#4038f0', O = '#fb9440';
    const runs = [
      [R, '65,682 80,686 92,698 103,705 117,716'], [G, '117,716 129,711'], [R, '129,711 143,712 155,718'], [G, '155,718 180,713 193,703'],
      [R, '193,703 206,712 219,718 232,729'], [G, '232,729 244,722'], [R, '244,722 257,740'], [G, '257,740 270,727 282,713'],
      [R, '282,713 295,718 308,718 321,724'], [G, '321,724 333,721'], [R, '333,721 346,728 358,730'], [G, '358,730 372,727'],
      [R, '372,727 384,730 397,730'], [G, '397,730 410,711'], [R, '410,711 423,711'], [G, '423,711 435,704 447,685'],
      [R, '447,685 460,707 473,734 487,741 500,763 525,783'], [G, '525,783 537,753'], [R, '537,753 550,757'], [G, '550,757 562,740 575,738'],
      [R, '575,738 602,744 627,747 639,756'], [G, '639,756 652,734'], [R, '652,734 664,741 678,744 690,753'], [G, '690,753 703,751 715,740'],
      [R, '715,740 740,744'], [G, '740,744 753,731 767,710'], [R, '767,710 778,712'], [G, '778,712 792,707'], [R, '792,707 804,724'],
      [O, '65,641 80,650 92,663 103,687 117,716'], [B, '117,716 129,732'], [O, '129,732 143,740 155,766'], [B, '155,766 170,790'],
      [B, '190,790 193,785'], [O, '193,785 206,783 219,785 228,790'], [B, '268,790 282,768'], [O, '282,768 295,733 308,713 321,732'],
      [B, '321,732 333,743'], [O, '333,743 346,765 358,776'], [B, '358,776 372,790'], [B, '398,790 410,753'], [O, '410,753 423,710'],
      [B, '423,710 435,667 447,640'], [O, '447,640 461,651 473,717 487,770 494,790'], [O, '543,790 550,784'], [B, '550,784 562,763 575,757'],
      [O, '575,757 588,755 597,760 615,773 627,783 637,790'], [B, '637,790 652,781'], [O, '652,781 665,773 678,762 690,764'],
      [B, '690,764 703,757 715,740'], [O, '715,740 728,731 740,728'], [B, '740,728 753,725 767,689'], [O, '767,689 778,649'], [B, '778,649 792,621'], [O, '792,621 804,645'],
    ];
    $('osc').innerHTML = runs.map(([c, pts]) => `<polyline points="${pts}" stroke="${c}"/>`).join('');

    // volume bars: x, top, colour
    const g = '#a3a3a3';
    $('volume').innerHTML = [[442, 846, '#a8c0a8'], [455, 846, '#a8c0a8'], [468, 846, g], [480, 843, '#8a8eb8'], [493, 841, g], [505, 836, g], [518, 836, g], [531, 839, g], [544, 841, g], [556, 846, '#3a3aff'], [569, 842, '#6f86c8'], [582, 843, '#6f86c8'], [595, 843, '#7a80d0'], [607, 845, '#3a3aff'], [620, 845, '#a8a8d0'], [633, 843, '#6464c8'], [645, 842, '#a020f0'], [658, 844, '#7878c0'], [671, 845, g], [683, 841, g], [697, 840, g], [709, 844, '#9090b8'], [722, 844, '#9090b8'], [734, 841, '#a020f0'], [747, 844, g], [760, 841, '#6f86c8'], [773, 844, g], [785, 844, g], [794, 843, g]]
      .map(([x, y, c]) => `<rect x="${x}" y="${y}" width="11" height="${853 - y}" fill="${c}"/>`).join('');
    $('tri').innerHTML = [168, 180, 193, 206, 219, 232, 244, 257, 270, 372, 384, 397, 499, 511, 524, 537, 550, 626, 639, 652, 690]
      .map(x => `<path d="M${x - 3} 861l2-2h2l2 2z"/>`).join('');
  </script>
</body>
</html>
